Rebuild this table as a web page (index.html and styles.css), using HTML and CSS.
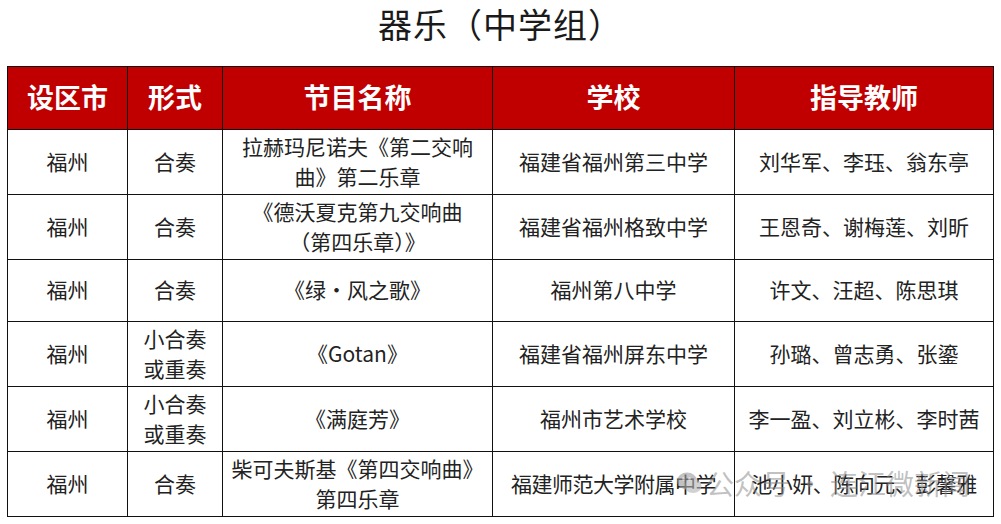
FILE: index.html
```html
<!DOCTYPE html>
<html lang="zh">
<head>
<meta charset="utf-8">
<link rel="stylesheet" href="styles.css">
</head>
<body>
<div class="page">
  <h1 class="title">器乐（中学组）</h1>
  <table class="grid">
    <colgroup>
      <col class="c1"><col class="c2"><col class="c3"><col class="c4"><col class="c5">
    </colgroup>
    <thead>
      <tr class="head"><th>设区市</th><th>形式</th><th>节目名称</th><th>学校</th><th>指导教师</th></tr>
    </thead>
    <tbody>
      <tr class="r65"><td>福州</td><td>合奏</td><td>拉赫玛尼诺夫《第二交响<br>曲》第二乐章</td><td>福建省福州第三中学</td><td>刘华军、李珏、翁东亭</td></tr>
      <tr class="r65"><td>福州</td><td>合奏</td><td>《德沃夏克第九交响曲<br>（第四乐章）》</td><td>福建省福州格致中学</td><td>王恩奇、谢梅莲、刘昕</td></tr>
      <tr class="r62"><td>福州</td><td>合奏</td><td>《绿·风之歌》</td><td>福州第八中学</td><td>许文、汪超、陈思琪</td></tr>
      <tr class="r65"><td>福州</td><td>小合奏<br>或重奏</td><td>《Gotan》</td><td>福建省福州屏东中学</td><td>孙璐、曾志勇、张鎏</td></tr>
      <tr class="r65"><td>福州</td><td>小合奏<br>或重奏</td><td>《满庭芳》</td><td>福州市艺术学校</td><td>李一盈、刘立彬、李时茜</td></tr>
      <tr class="r65"><td>福州</td><td>合奏</td><td>柴可夫斯基《第四交响曲》<br>第四乐章</td><td class="tight">福建师范大学附属中学</td><td class="tight">池小妍、陈向元、彭馨雅</td></tr>
    </tbody>
  </table>
  <div class="watermark">
    <svg class="wm-icon" width="26" height="24" viewBox="0 0 26 24"><ellipse cx="11" cy="10" rx="10" ry="8.5" fill="#9a9a9a"/><ellipse cx="17" cy="15" rx="8.5" ry="7" fill="#b4b4b4"/><circle cx="7.5" cy="8" r="1.4" fill="#fff"/><circle cx="13.5" cy="8" r="1.4" fill="#fff"/></svg>
    <span>公众号</span><span class="wm-dot">·</span><span>连江微新闻</span>
  </div>
</div>
</body>
</html>
```

FILE: styles.css
```css
html, body {
  margin: 0;
  padding: 0;
  background: #ffffff;
}
.page {
  position: relative;
  width: 1001px;
  height: 524px;
  overflow: hidden;
  font-family: "Noto Sans CJK SC", "Noto Sans", sans-serif;
}
.title {
  margin: 0;
  height: 66px;
  line-height: 48px;
  text-align: center;
  font-size: 34px;
  font-weight: 400;
  color: #1a1a1a;
  letter-spacing: 1px;
}
.grid {
  margin-left: 7px;
  width: 986px;
  border-collapse: collapse;
  table-layout: fixed;
}
.c1 { width: 120px; }
.c2 { width: 95px; }
.c3 { width: 270px; }
.c4 { width: 242px; }
.c5 { width: 259px; }
.grid th, .grid td {
  border: 1px solid #111;
  text-align: center;
  vertical-align: middle;
  padding: 0 0 3px;
}
.head th {
  height: 59px;
  background: #c00000;
  color: #ffffff;
  font-size: 27px;
  font-weight: 700;
}
.grid td {
  font-size: 21px;
  line-height: 30px;
  color: #222;
  white-space: nowrap;
}
.grid td.tight {
  letter-spacing: -0.5px;
}
.r65 td { height: 61px; }
.r62 td { height: 58px; }
.watermark {
  position: absolute;
  left: 676px;
  top: 465px;
  display: flex;
  align-items: center;
  gap: 2px;
  font-size: 28px;
  line-height: 36px;
  color: rgba(140, 140, 140, 0.55);
  pointer-events: none;
}
.wm-icon {
  opacity: 0.6;
  margin-right: 2px;
}
.wm-dot {
  margin: 0 4px;
}
```
